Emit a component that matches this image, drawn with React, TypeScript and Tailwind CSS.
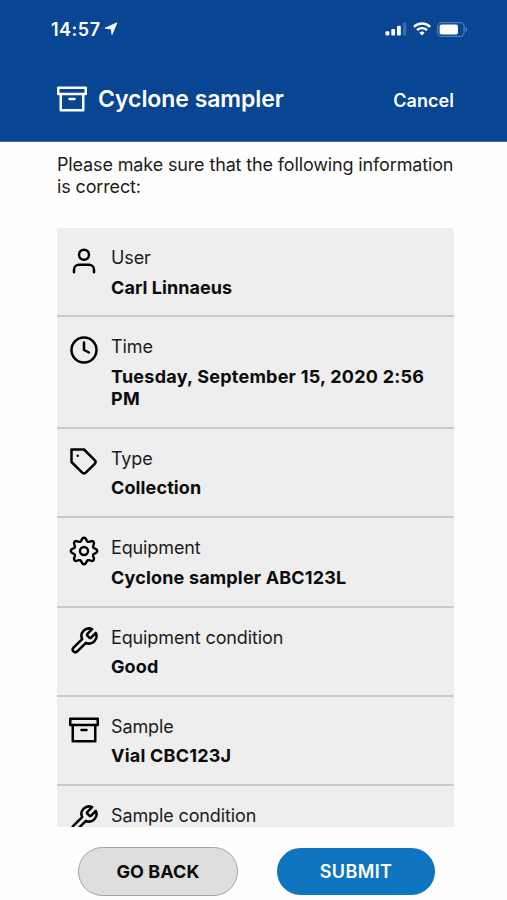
import type { ReactNode } from "react";
import { FiArchive, FiClock, FiTag, FiTool, FiUser } from "react-icons/fi";

const gearPath =
  Array.from({ length: 96 }, (_, i) => {
    const a = (i / 96) * Math.PI * 2;
    const wave = Math.cos(8 * a);
    const r = 11.6 + 1.65 * Math.sign(wave) * Math.pow(Math.abs(wave), 0.8);
    return `${i === 0 ? "M" : "L"}${(15 + r * Math.cos(a)).toFixed(2)} ${(15 + r * Math.sin(a)).toFixed(2)}`;
  }).join("") + "Z";

function Gear() {
  return (
    <svg width="30" height="30" viewBox="0 0 30 30" fill="none" stroke="currentColor" strokeWidth="2.4" strokeLinejoin="round">
      <path d={gearPath} />
      <circle cx="15" cy="15" r="4" />
    </svg>
  );
}

function StatusBar() {
  return (
    <div className="flex h-[58px] items-center justify-between pl-[51px] pr-[39px]">
      <div className="flex items-center gap-[3px] text-[18px] font-semibold tracking-[0.5px]">
        <span>14:57</span>
        <svg width="14" height="14" viewBox="0 0 14 14" fill="currentColor" stroke="currentColor" strokeWidth="0.8" strokeLinejoin="round">
          <path d="M12.9 0.8 8 12.6 7.2 7 1 6.2Z" />
        </svg>
      </div>
      <div className="flex items-center gap-[6px]">
        <svg width="22" height="14" viewBox="0 0 22 14" fill="currentColor">
          <rect x="0.5" y="9.2" width="3.8" height="4.3" rx="1" />
          <rect x="6.3" y="7" width="3.8" height="6.5" rx="1" />
          <rect x="12" y="3.8" width="3.8" height="9.7" rx="1" />
          <rect x="17.8" y="0.5" width="3.6" height="13" rx="1" opacity="0.2" />
        </svg>
        <svg width="18" height="14" viewBox="0 0 18 14" fill="none" stroke="currentColor" strokeWidth="2.4">
          <path d="M0.9 4.9a11.4 11.4 0 0 1 16.2 0" />
          <path d="M4 8.2a7 7 0 0 1 10 0" />
          <path d="M6.3 10.8a3.8 3.8 0 0 1 5.4 0L9 13.5Z" fill="currentColor" stroke="none" />
        </svg>
        <svg width="31" height="15" viewBox="0 0 31 15" fill="none">
          <rect x="0.7" y="0.7" width="26.4" height="13.6" rx="4" stroke="white" strokeOpacity="0.3" strokeWidth="1.3" />
          <rect x="2.6" y="2.6" width="18.4" height="9.8" rx="2" fill="white" />
          <path d="M28.7 5.2c1.7.6 1.7 4 0 4.6Z" fill="white" fillOpacity="0.4" />
        </svg>
      </div>
    </div>
  );
}

function Row({ icon, label, children }: { icon: ReactNode; label: string; children?: ReactNode }) {
  return (
    <div className="flex gap-[12px] border-b-2 border-[#c9c9c9] pt-[18px] pr-[12px] pb-[16.9px] pl-[12px] leading-[22px] last:border-b-0">
      <div className="w-[30px] shrink-0 text-[30px]">{icon}</div>
      <div className="flex flex-col gap-[7.5px] pt-[1px]">
        <div className="text-[18px] tracking-[-0.12px] text-[#1c1c1c]">{label}</div>
        {children && <div className="text-[18px] font-bold text-[#0c0c0c]">{children}</div>}
      </div>
    </div>
  );
}

export default function App() {
  return (
    <div className="flex h-[900px] w-[507px] flex-col overflow-hidden bg-[#fefefe] font-['Inter','Liberation_Sans',sans-serif]">
      <header className="h-[142px] shrink-0 border-b border-[#3f6daa] bg-[#084593] text-white">
        <StatusBar />
        <div className="flex items-center justify-between pt-[25px] pr-[53px] pl-[57px]">
          <div className="flex items-center gap-[11px]">
            <FiArchive className="size-[30px]" />
            <h1 className="pt-[1px] text-[23px] leading-[30px] font-semibold tracking-[-0.05px]">Cyclone sampler</h1>
          </div>
          <button className="pt-[5px] text-[18px] leading-[26px] font-semibold tracking-[0.06px]">Cancel</button>
        </div>
      </header>

      <main className="flex h-[685px] shrink-0 flex-col overflow-hidden pr-[53px] pl-[57px]">
        <p className="pt-[11.5px] text-[18px] leading-[22px] tracking-[-0.14px] whitespace-nowrap text-[#1c1c1c]">
          Please make sure that the following information
          <br />
          is correct:
        </p>
        <section className="mt-[30.5px] h-[620px] shrink-0 rounded-t-[4px] bg-[#eeeeee]">
          <Row icon={<FiUser />} label="User">
            <span className="tracking-[0.06px]">Carl Linnaeus</span>
          </Row>
          <Row icon={<FiClock />} label="Time">
            <span className="tracking-[0.24px]">
              Tuesday, September 15, 2020 2:56
              <br />
              PM
            </span>
          </Row>
          <Row icon={<FiTag />} label="Type">
            <span className="tracking-[0.12px]">Collection</span>
          </Row>
          <Row icon={<Gear />} label="Equipment">
            <span className="tracking-[0.16px]">Cyclone sampler ABC123L</span>
          </Row>
          <Row icon={<FiTool />} label="Equipment condition">
            <span className="tracking-[0.1px]">Good</span>
          </Row>
          <Row icon={<FiArchive />} label="Sample">
            <span className="tracking-[0.22px]">Vial CBC123J</span>
          </Row>
          <Row icon={<FiTool />} label="Sample condition" />
        </section>
      </main>

      <footer className="flex gap-[39px] pt-[20px] pl-[78px]">
        <button className="h-[49px] w-[160px] rounded-full border-[1.5px] border-[#a3a3a3] bg-[#dedede] text-[18px] font-bold tracking-[0.1px] text-[#0c0c0c]">
          GO BACK
        </button>
        <button className="mt-[1px] h-[47px] w-[158px] rounded-full bg-[#0f75c0] text-[18px] font-semibold tracking-[0.4px] text-white">
          SUBMIT
        </button>
      </footer>
    </div>
  );
}
